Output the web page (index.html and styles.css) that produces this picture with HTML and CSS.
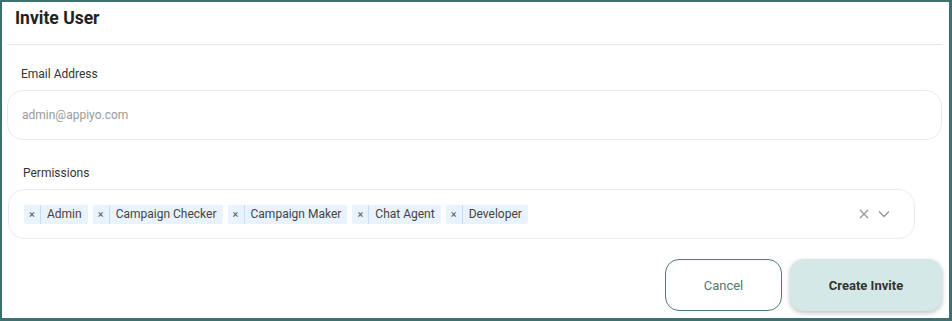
FILE: index.html
```html
<!DOCTYPE html>
<html lang="en">
<head>
    <meta charset="UTF-8">
    <meta name="viewport" content="width=device-width, initial-scale=1.0">
    <title>Invite User</title>
    <link rel="stylesheet" href="styles.css">
</head>
<body>
    <div class="modal">
        <div class="modal-header">
            <h2>Invite User</h2>
        </div>

        <div class="field field-email">
            <label for="emailInput">Email Address</label>
            <input type="text" id="emailInput" placeholder="admin@appiyo.com">
        </div>

        <div class="field field-perms">
            <label>Permissions</label>
            <div class="select-box">
                <div class="tags">
                    <span class="tag"><span class="tag-x">×</span><span class="tag-label">Admin</span></span>
                    <span class="tag"><span class="tag-x">×</span><span class="tag-label">Campaign Checker</span></span>
                    <span class="tag"><span class="tag-x">×</span><span class="tag-label">Campaign Maker</span></span>
                    <span class="tag"><span class="tag-x">×</span><span class="tag-label">Chat Agent</span></span>
                    <span class="tag"><span class="tag-x">×</span><span class="tag-label">Developer</span></span>
                </div>
                <div class="select-icons">
                    <svg width="12" height="12" viewBox="0 0 12 12"><path d="M2 2 L10 10 M10 2 L2 10" stroke="#999" stroke-width="1.4" fill="none"/></svg>
                    <svg width="14" height="12" viewBox="0 0 14 12"><path d="M2 3.5 L7 8.5 L12 3.5" stroke="#999" stroke-width="1.5" fill="none"/></svg>
                </div>
            </div>
        </div>

        <div class="actions">
            <button class="btn btn-cancel">Cancel</button>
            <button class="btn btn-primary">Create Invite</button>
        </div>
    </div>
</body>
</html>
```

FILE: styles.css
```css
/* Base Styles */
body {
    margin: 0;
    font-family: 'Roboto', sans-serif;
    background-color: #3f7070;
    color: #333;
}

.modal {
    box-sizing: border-box;
    width: 947px;
    height: 316px;
    margin: 2px 0 0 2px;
    background-color: #ffffff;
    overflow: hidden;
}

.modal-header {
    margin: 0 7px 0 5px;
    padding: 6px 0 0 8px;
    height: 36px;
    border-bottom: 1px solid #e8e8e8;
}

.modal-header h2 {
    margin: 0;
    font-size: 17.5px;
    font-weight: 700;
    color: #222;
    line-height: 20px;
}

/* Form fields */
.field label {
    display: block;
    font-size: 12px;
    color: #333;
    line-height: 14px;
}

.field-email {
    margin: 22px 7px 0 5px;
}

.field-email label {
    padding-left: 14px;
}

.field-email input {
    box-sizing: border-box;
    width: 100%;
    height: 50px;
    margin-top: 9px;
    padding: 0 14px;
    border: 1px solid #ebe8f7;
    border-radius: 16px;
    font-family: 'Roboto', sans-serif;
    font-size: 12px;
    color: #333;
    outline: none;
}

.field-email input::placeholder {
    color: #9a9a9a;
}

.field-perms {
    margin: 26px 34px 0 6px;
}

.field-perms label {
    padding-left: 15px;
}

.select-box {
    box-sizing: border-box;
    height: 50px;
    margin-top: 9px;
    padding: 0 23px 0 15px;
    border: 1px solid #ebe8f7;
    border-radius: 16px;
    display: flex;
    align-items: center;
    justify-content: space-between;
}

.tags {
    display: flex;
    gap: 5px;
}

.tag {
    display: flex;
    align-items: stretch;
    height: 19px;
    background-color: #e9f3fd;
    border-radius: 2px;
    font-size: 12px;
    color: #444;
    line-height: 19px;
}

.tag-x {
    width: 16px;
    text-align: center;
    font-size: 11px;
    color: #555;
    border-right: 1px solid #c3ddf7;
}

.tag-label {
    padding: 0 6px;
}

.select-icons {
    display: flex;
    align-items: center;
    gap: 7px;
}

/* Buttons */
.actions {
    display: flex;
    justify-content: flex-end;
    gap: 8px;
    margin: 20px 7px 0 0;
}

.btn {
    box-sizing: border-box;
    height: 52px;
    font-family: 'Roboto', sans-serif;
    font-size: 13px;
    border-radius: 14px;
    cursor: pointer;
}

.btn-cancel {
    width: 117px;
    background-color: #ffffff;
    border: 1px solid #4b7b7b;
    color: #4b7b7b;
}

.btn-primary {
    width: 152px;
    background-color: #d4e8e8;
    border: none;
    color: #333;
    font-weight: 700;
    box-shadow: 0 2px 5px rgba(0, 0, 0, 0.25);
}
```
